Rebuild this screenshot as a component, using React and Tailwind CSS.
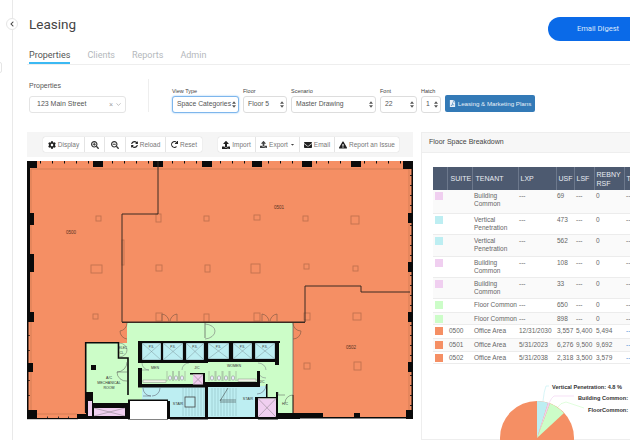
import React from "react";
import {
  FaCog,
  FaSearchPlus,
  FaSearchMinus,
  FaSyncAlt,
  FaRedo,
  FaUpload,
  FaEnvelope,
  FaExclamationTriangle,
  FaFilePdf,
  FaChevronLeft,
  FaCaretDown,
} from "react-icons/fa";

const ORANGE = "#f58f64";
const GREEN = "#ccfdc8";
const BLUE = "#bdeef2";
const PINK = "#f0cff0";
const WALL = "#0a0a0a";

const rows = [
  { color: PINK, suite: "", tenant: "Building Common", lxp: "---", usf: "69", lsf: "---", rsf: "0", h: "h-[23px]" },
  { color: BLUE, suite: "", tenant: "Vertical Penetration", lxp: "---", usf: "473", lsf: "---", rsf: "0", h: "h-[21px]" },
  { color: BLUE, suite: "", tenant: "Vertical Penetration", lxp: "---", usf: "562", lsf: "---", rsf: "0", h: "h-[22px]" },
  { color: PINK, suite: "", tenant: "Building Common", lxp: "---", usf: "108", lsf: "---", rsf: "0", h: "h-[21px]" },
  { color: PINK, suite: "", tenant: "Building Common", lxp: "---", usf: "33", lsf: "---", rsf: "0", h: "h-[21px]" },
  { color: GREEN, suite: "", tenant: "Floor Common", lxp: "---", usf: "650", lsf: "---", rsf: "0", h: "h-[14px]" },
  { color: GREEN, suite: "", tenant: "Floor Common", lxp: "---", usf: "898", lsf: "---", rsf: "0", h: "h-[12px]" },
  { color: ORANGE, suite: "0500", tenant: "Office Area", lxp: "12/31/2030", usf: "3,557", lsf: "5,400", rsf: "5,494", h: "h-[14px]", link: true },
  { color: ORANGE, suite: "0501", tenant: "Office Area", lxp: "5/31/2023", usf: "6,276", lsf: "9,500", rsf: "9,692", h: "h-[13px]", link: true },
  { color: ORANGE, suite: "0502", tenant: "Office Area", lxp: "5/31/2038", usf: "2,318", lsf: "3,500", rsf: "3,579", h: "h-[12px]", link: true },
];

// perimeter columns and walls, in page pixels
const perimeter = [
  [27, 161, 10, 7], [93, 161, 10, 6], [153, 161, 10, 6], [202, 161, 10, 6], [252, 161, 10, 6],
  [302, 161, 10, 6], [351, 161, 10, 6], [403, 161, 10, 8],
  [27, 161, 3, 161], [27, 161, 1.5, 258], [27, 213, 7, 12], [27, 254, 7, 18], [27, 312, 7, 10], [27, 363, 6, 9], [27, 410, 10, 9],
  [411.5, 161, 1.5, 258], [408, 213, 5, 10], [408, 262, 5, 10], [408, 312, 5, 10], [408, 362, 5, 10], [406, 410, 7, 9],
  [27, 418, 51, 1.2], [77, 414, 9, 5], [300, 413, 23, 5.5], [323, 417, 90, 1.5], [354, 413, 6, 5],
];

const squares = [
  [96, 216, 5, 5], [91, 265, 11, 8], [93, 314, 5, 5], [156, 214, 5, 8], [156, 265, 6, 6],
  [204, 216, 5, 5], [205, 265, 5, 7], [156, 313, 6, 8], [204, 314, 5, 8], [254, 215, 6, 5],
  [303, 216, 5, 5], [351, 216, 8, 8], [251, 264, 9, 9], [304, 264, 5, 5], [353, 266, 5, 5],
  [304, 313, 6, 7], [353, 313, 8, 7], [254, 313, 6, 8], [122, 240, 2, 25], [304, 363, 6, 6], [354, 362, 7, 8],
];

const elevators = [
  [142, 343, 19, 17], [163, 343, 20, 17], [186, 343, 18, 17],
  [208, 343, 21, 16], [233, 343, 19, 16], [255, 343, 20, 16],
];

// black core walls
const coreWalls = [
  [138, 341, 67, 2], [138, 341, 4, 22], [204, 341, 4, 22], [161, 343, 2, 17], [183, 343, 3, 17], [138, 360, 67, 3],
  [205, 341, 75, 2], [229, 343, 4, 16], [252, 343, 3, 16], [275, 341, 4, 24], [205, 359, 74, 3],
  [138, 368, 4, 19], [138, 384, 67, 3.5], [205, 382, 55, 5], [257, 371, 3, 15], [266, 384, 1.5, 13],
  [190, 373, 15, 1.5], [203, 373, 2, 13],
  [166, 401, 4, 18], [205, 387, 3, 31], [170, 417, 38, 2.5], [208, 417, 50, 2],
  [255, 397, 3, 21], [255, 397, 23, 1.5], [276, 392, 2, 27], [258, 417, 20, 2.5], [277, 413, 23, 6],
];

const PlanLabel = ({ x, y, children, size = 3.6 }) => (
  <text x={x} y={y} textAnchor="middle" fontSize={size} fill="#333" fontFamily="Liberation Sans, sans-serif">
    {children}
  </text>
);

const FloorPlan = () => (
  <svg viewBox="27 160 386 280" className="block h-[280px] w-[386px]">
    <rect x="27" y="160" width="386" height="280" fill="#fff" />
    <rect x="28" y="161" width="384" height="257" fill={ORANGE} />

    {/* perimeter ticks and inner line */}
    {Array.from({ length: 31 }, (_, i) => (
      <rect key={`t${i}`} x={40 + i * 12} y="161" width="1" height="2.5" fill="#111" />
    ))}
    {Array.from({ length: 24 }, (_, i) => (
      <rect key={`r${i}`} x="410" y={175 + i * 10} width="2" height="1" fill="#222" />
    ))}
    {Array.from({ length: 5 }, (_, i) => (
      <rect key={`l${i}`} x="28" y={335 + i * 15} width="2" height="1" fill="#5a3526" />
    ))}
    {[47, 58, 68].map((x) => (
      <rect key={x} x={x} y="416.5" width="1" height="2" fill="#333" />
    ))}
    <path d="M31 169H409V414M31 169V414H77" fill="none" stroke="#c9764f" strokeWidth="0.7" />

    {perimeter.map(([x, y, w, h], i) => (
      <rect key={i} x={x} y={y} width={w} height={h} fill={WALL} />
    ))}
    {squares.map(([x, y, w, h], i) => (
      <rect key={i} x={x} y={y} width={w} height={h} fill="none" stroke="#c2714e" strokeWidth="0.9" />
    ))}

    {/* tenant lines */}
    <path d="M158 161V214H122V322H305V286H361V292H410" fill="none" stroke="#3a2a22" strokeWidth="1" />

    <g fontFamily="Liberation Sans, sans-serif" fontSize="4.6" fill="#5a3526" textAnchor="middle">
      <text x="71" y="234">0500</text>
      <text x="279" y="209">0501</text>
      <text x="351" y="349">0502</text>
    </g>

    {/* core */}
    <rect x="127" y="323" width="166" height="90" fill={GREEN} />
    <path d="M122 322.5H305" stroke="#3a2a22" strokeWidth="1" />
    <path d="M293 323V395M205 323V338" stroke="#555" strokeWidth="0.7" fill="none" />

    {/* doors */}
    <g fill="none" stroke="#8a5f48" strokeWidth="0.7">
      <path d="M162 322V314A8 8 0 0 1 169 322M177 322V314A8 8 0 0 0 170 322" />
      <path d="M262 322V314A8 8 0 0 1 269 322M277 322V314A8 8 0 0 0 270 322" />
      <path d="M127 323A8 8 0 0 1 120 331M120 331A8 8 0 0 0 127 339" />
      <path d="M293 323A8 8 0 0 0 301 331M301 331A8 8 0 0 1 293 339" />
    </g>
    <path d="M205 324A11 7 0 0 1 215 331A11 8 0 0 1 205 339" fill="none" stroke="#777" strokeWidth="0.6" />

    {/* mechanical room */}
    <rect x="86" y="343" width="41" height="60" fill={GREEN} />
    <path d="M85.7 413V342.7H118.5V358H128V395" fill="none" stroke={WALL} strokeWidth="1.6" />
    <rect x="91" y="365" width="5" height="5" fill={WALL} />
    <rect x="86" y="392" width="7" height="27" fill={WALL} />
    <rect x="86" y="403" width="43" height="16" fill={WALL} />
    <rect x="88" y="401" width="4" height="15" fill={PINK} />
    <rect x="94" y="408" width="31" height="8" fill={PINK} />
    <path d="M94 408L125 416M125 408L94 416" stroke="#666" strokeWidth="0.4" />
    <path d="M117 372A10 10 0 0 0 127 362M117 372H127M117 372A9 9 0 0 0 127 381" fill="none" stroke="#555" strokeWidth="0.5" />
    <path d="M119 343A8 7 0 0 1 127 350A8 7 0 0 1 119 357" fill="none" stroke="#666" strokeWidth="0.5" />
    <PlanLabel x="109" y="379">A/C</PlanLabel>
    <PlanLabel x="109" y="384">MECHANICAL</PlanLabel>
    <PlanLabel x="109" y="389">ROOM</PlanLabel>
    <PlanLabel x="123" y="349" size="3.2">ELEC</PlanLabel>
    <PlanLabel x="122" y="354" size="3.2">CL.</PlanLabel>

    {/* stairs */}
    <rect x="142" y="387" width="24" height="14" fill={BLUE} />
    <rect x="166" y="387" width="40" height="30" fill={BLUE} />
    <rect x="208" y="386" width="48" height="31" fill={BLUE} />
    <rect x="255" y="386" width="12" height="12" fill={BLUE} />
    {[173, 176, 179, 182, 185, 188, 191, 194].map((x) => (
      <line key={x} x1={x + 10} y1="388" x2={x + 10} y2="416" stroke="#6f969c" strokeWidth="0.35" />
    ))}
    {[212, 215, 218, 221, 224, 227, 230, 233, 236].map((x) => (
      <line key={x} x1={x} y1="388" x2={x} y2="416" stroke="#6f969c" strokeWidth="0.35" />
    ))}
    <rect x="185" y="397" width="10" height="10" fill={BLUE} stroke="#444" strokeWidth="0.8" />
    <path d="M220 401L228 388M220 400H236M220 402H236" stroke="#333" strokeWidth="0.5" fill="none" />
    <path d="M143 388A8 8 0 0 0 151 396M143 396H151M160 388A8 8 0 0 1 152 396" fill="none" stroke="#556" strokeWidth="0.5" />
    <path d="M266 385A9 9 0 0 1 257 394" fill="none" stroke="#556" strokeWidth="0.5" />
    <PlanLabel x="178" y="405">STAIR</PlanLabel>
    <PlanLabel x="248" y="400">STAIR</PlanLabel>

    {/* elevators */}
    {elevators.map(([x, y, w, h], i) => (
      <g key={i}>
        <rect x={x} y={y} width={w} height={h} fill={BLUE} stroke="#556" strokeWidth="0.4" />
        <path d={`M${x} ${y}L${x + w} ${y + h}M${x + w} ${y}L${x} ${y + h}`} stroke="#6f8388" strokeWidth="0.4" />
        <text x={x + w / 2} y={y + 5} textAnchor="middle" fontSize="3" fill="#333" fontFamily="Liberation Sans, sans-serif">P.S.</text>
      </g>
    ))}

    {/* restrooms */}
    <path d="M142 363A7 7 0 0 0 149 370M142 370H149M189 363A7 7 0 0 0 182 370M258 363A8 7 0 0 1 266 370M258 371A8 7 0 0 0 266 378" fill="none" stroke="#667" strokeWidth="0.45" />
    <PlanLabel x="155" y="369">MEN</PlanLabel>
    <PlanLabel x="234" y="367">WOMEN</PlanLabel>
    <PlanLabel x="197" y="369">J/C</PlanLabel>
    <PlanLabel x="262" y="383">J/C</PlanLabel>
    {[167, 173, 179, 209, 216, 223, 230].map((x) => (
      <g key={x}>
        <path d={`M${x} 371V381M${x + 6} 371V381`} stroke="#777" strokeWidth="0.4" />
        <ellipse cx={x + 3} cy="378" rx="1.6" ry="2.2" fill="#eef" stroke="#666" strokeWidth="0.4" />
      </g>
    ))}
    <rect x="143" y="380" width="23" height="2.5" fill="#f2f4e8" stroke="#777" strokeWidth="0.4" />
    <rect x="238" y="379" width="18" height="2.5" fill="#f2f4e8" stroke="#777" strokeWidth="0.4" />

    {coreWalls.map(([x, y, w, h], i) => (
      <rect key={i} x={x} y={y} width={w} height={h} fill={WALL} />
    ))}

    <rect x="193" y="374.5" width="10" height="10" fill={PINK} />
    <path d="M193 374.5L203 384.5M203 374.5L193 384.5" stroke="#666" strokeWidth="0.4" />
    <rect x="258" y="398.5" width="18" height="18.5" fill={PINK} />
    <path d="M258 398.5L276 417M276 398.5L258 417" stroke="#666" strokeWidth="0.4" />

    <path d="M293 395A8 8 0 0 0 285 403M278 392V395H285" fill="none" stroke="#555" strokeWidth="0.5" />
    <path d="M293 395V413" stroke={WALL} strokeWidth="1" />
    <PlanLabel x="285" y="405">H/C</PlanLabel>

    {/* notch */}
    <rect x="128" y="399.5" width="40" height="20" fill={WALL} />
    <rect x="130" y="401" width="37" height="18" fill="#fff" />
  </svg>
);

const Pie = () => (
  <svg viewBox="490 380 140 60" className="block h-[60px] w-[140px]">
    <circle cx="537" cy="437" r="37" fill={ORANGE} />
    <path d="M537 437L537 400A37 37 0 0 1 548 401.7Z" fill={BLUE} />
    <path d="M537 437L548 401.7A37 37 0 0 1 550 402.4Z" fill={PINK} />
    <path d="M537 437L550 402.4A37 37 0 0 1 564 412Z" fill={GREEN} />
    <path d="M543 400Q544 390 546 385H549" fill="none" stroke={BLUE} strokeWidth="0.6" />
    <path d="M549 402Q552 396 554 395H574" fill="none" stroke={PINK} strokeWidth="0.6" />
    <path d="M558 406Q560 402 566 401L584 407" fill="none" stroke={GREEN} strokeWidth="0.6" />
    <g fontFamily="Liberation Sans, sans-serif" fontWeight="700" fontSize="5.6" fill="#333">
      <text x="552" y="388">Vertical Penetration: 4.8 %</text>
      <text x="578" y="399">Building Common:</text>
      <text x="588" y="411">FloorCommon:</text>
    </g>
  </svg>
);

const Arrows = () => (
  <svg viewBox="0 0 6 10" className="h-[7px] w-[4px] shrink-0 fill-[#555]">
    <path d="M3 0L6 4H0ZM3 10L0 6H6Z" />
  </svg>
);

const Field = ({ label, value, className = "", focus }) => (
  <div className="flex flex-col">
    <span className="mb-[1px] h-[8px] text-[5.5px] leading-[8px] text-[#444]">{label}</span>
    <div
      className={`flex h-[17px] items-center justify-between rounded-[3px] border bg-white pl-[4px] pr-[2px] text-[6.8px] text-[#555] ${
        focus ? "border-[#7eb6ec] shadow-[0_0_2px_#8fc4f5]" : "border-[#ddd]"
      } ${className}`}
    >
      <span className="whitespace-nowrap">{value}</span>
      <Arrows />
    </div>
  </div>
);

const ToolButton = ({ icon, children, className = "" }) => (
  <div className={`flex h-full items-center justify-center gap-[2px] border-r border-[#e4e4e4] text-[6.5px] text-[#777] last:border-r-0 ${className}`}>
    {icon}
    {children}
  </div>
);

const Toolbar = () => (
  <div className="flex h-[25px] items-center bg-[#f5f5f5] pl-[16px]">
    <div className="flex h-[15px] rounded-[2px] bg-white shadow-[0_0_1px_#bbb]">
      <ToolButton className="w-[42px]" icon={<FaCog className="size-[8px] text-[#222]" />}>Display</ToolButton>
      <ToolButton className="w-[20px]" icon={<FaSearchPlus className="size-[8px] text-[#333]" />} />
      <ToolButton className="w-[21px]" icon={<FaSearchMinus className="size-[8px] text-[#333]" />} />
      <ToolButton className="w-[40px]" icon={<FaSyncAlt className="size-[7px] text-[#222]" />}>Reload</ToolButton>
      <ToolButton className="w-[36px]" icon={<FaRedo className="size-[7px] text-[#222]" />}>Reset</ToolButton>
    </div>
    <div className="ml-[16px] flex h-[15px] rounded-[2px] bg-white shadow-[0_0_1px_#bbb]">
      <ToolButton className="w-[38px]" icon={<FaUpload className="size-[8px] text-[#222]" />}>Import</ToolButton>
      <ToolButton className="w-[44px]" icon={<FaUpload className="size-[7px] text-[#444]" />}>
        Export <FaCaretDown className="size-[5px] text-[#444]" />
      </ToolButton>
      <ToolButton className="w-[35px]" icon={<FaEnvelope className="size-[8px] text-[#222]" />}>Email</ToolButton>
      <ToolButton className="w-[64px]" icon={<FaExclamationTriangle className="size-[8px] text-[#222]" />}>Report an Issue</ToolButton>
    </div>
  </div>
);

const Breakdown = () => (
  <div className="h-[308px] w-[240px] shrink-0 border border-[#eee] bg-white">
    <div className="flex h-[20px] items-center border-b border-[#eee] bg-[#f7f7f7] pl-[7px] text-[7px] text-[#444]">
      Floor Space Breakdown
    </div>
    <div className="pl-[11px] pt-[14px]">
      <table className="w-[209px] table-fixed border-collapse text-[6.5px] text-[#666]">
        <colgroup>
          <col className="w-[14px]" />
          <col className="w-[25px]" />
          <col className="w-[46px]" />
          <col className="w-[38px]" />
          <col className="w-[18px]" />
          <col className="w-[20px]" />
          <col className="w-[30px]" />
          <col className="w-[18px]" />
        </colgroup>
        <thead>
          <tr className="h-[23px] bg-[#4d5a70] text-left text-[7px] font-normal leading-[9px] text-[#e8ecf2]">
            <th className="border-r border-[#6c788c] font-normal"></th>
            <th className="border-r border-[#6c788c] pl-[3px] font-normal">SUITE</th>
            <th className="border-r border-[#6c788c] pl-[3px] font-normal">TENANT</th>
            <th className="border-r border-[#6c788c] pl-[2px] font-normal">LXP</th>
            <th className="border-r border-[#6c788c] pl-[2px] font-normal">USF</th>
            <th className="border-r border-[#6c788c] pl-[2px] font-normal">LSF</th>
            <th className="border-r border-[#6c788c] pl-[2px] font-normal">REBNY RSF</th>
            <th className="pl-[2px] font-normal">T F</th>
          </tr>
        </thead>
        <tbody>
          {rows.map((row, i) => (
            <tr key={i} className={`${row.h} border-b border-[#ececec] align-top leading-[8px] ${i % 2 === 0 ? "bg-[#fafafa]" : "bg-white"}`}>
              <td className="pl-[2px] pt-[2px]">
                <div className="size-[8px]" style={{ backgroundColor: row.color }} />
              </td>
              <td className="pl-[2px] pt-[2px]">{row.suite}</td>
              <td className="pl-[2px] pt-[2px]">{row.tenant}</td>
              <td className="pl-[1px] pt-[2px] whitespace-nowrap">{row.lxp}</td>
              <td className="pl-[1px] pt-[2px]">{row.usf}</td>
              <td className="pl-[2px] pt-[2px]">{row.lsf}</td>
              <td className="pl-[2px] pt-[2px]">{row.rsf}</td>
              <td className={`pl-[2px] pt-[2px] ${row.link ? "text-[#4a90d9]" : ""}`}>--</td>
            </tr>
          ))}
        </tbody>
      </table>
      <div className="ml-[57px] mt-[17px]">
        <Pie />
      </div>
    </div>
  </div>
);

export default function App() {
  return (
    <div className="relative flex h-[440px] w-[630px] overflow-hidden bg-white font-['Roboto',sans-serif]">
      <div className="w-[13px] shrink-0 border-r border-[#e9e9e9]" />

      {/* collapse button and edge tab lie over the sidebar border */}
      <div className="absolute left-[6px] top-[18px] flex size-[12px] items-center justify-center rounded-full border border-[#e5e5e5] bg-white">
        <FaChevronLeft className="size-[6px] text-[#444]" />
      </div>
      <div className="absolute left-[-3px] top-[62px] h-[11px] w-[5px] rounded-[2px] border border-[#e5e5e5]" />

      <div className="min-w-0 flex-1 pl-[14px]">
        <div className="flex h-[47px] items-start justify-between pl-[2px]">
          <h1 className="pt-[14px] text-[13.5px] font-normal leading-[20px] text-[#444]">Leasing</h1>
          <button className="mt-[17px] h-[24px] w-[82px] rounded-l-[12px] bg-[#0a6ae8] pl-[18px] text-[7.6px] text-[#dce9fb]">Email Digest</button>
        </div>

        <div className="flex h-[18px] gap-[17px] border-b border-[#eeeeee] pl-[2px] text-[9px] text-[#b4b8bc]">
          <div className="h-[17px] border-b-2 border-[#3bb9f3] pt-[2px] leading-[13px] text-[#555]">Properties</div>
          <div className="pt-[2px] leading-[13px]">Clients</div>
          <div className="pt-[2px] leading-[13px]">Reports</div>
          <div className="pt-[2px] leading-[13px]">Admin</div>
        </div>

        <div className="flex h-[67px] items-start pl-[2px] pt-[16px] font-['Liberation_Sans',sans-serif]">
          <div className="flex w-[97px] flex-col">
            <span className="mb-[6px] text-[7px] leading-[9px] text-[#555]">Properties</span>
            <div className="flex h-[17px] items-center justify-between rounded-[3px] border border-[#e4e4e4] bg-white pl-[7px] pr-[4px] text-[7px] text-[#555]">
              <span>123 Main Street</span>
              <span className="flex items-center gap-[3px] text-[#999]">
                <span className="text-[7px] leading-none">×</span>
                <svg viewBox="0 0 8 5" className="h-[3px] w-[5px] fill-none stroke-[#999]"><path d="M0.5 0.5L4 4L7.5 0.5" /></svg>
              </span>
            </div>
          </div>
          <div className="ml-[22px] mr-[23px] mt-[-2px] h-[33px] w-px bg-[#eeeeee]" />
          <div className="mt-[6px] flex items-end gap-[4px]">
            <Field label="View Type" value="Space Categories" focus className="w-[67px]" />
            <Field label="Floor" value="Floor 5" className="w-[44px]" />
            <Field label="Scenario" value="Master Drawing" className="w-[85px]" />
            <Field label="Font" value="22" className="w-[37px]" />
            <Field label="Hatch" value="1" className="w-[20px]" />
            <button className="mb-[1px] flex h-[17px] w-[90px] items-center justify-center gap-[2px] rounded-[2px] bg-[#337ab7] text-[6.2px] text-[#e8f0f8]">
              <FaFilePdf className="size-[7px]" />
              Leasing &amp; Marketing Plans
            </button>
          </div>
        </div>

        <div className="flex gap-[8px] font-['Liberation_Sans',sans-serif]">
          <div className="w-[386px] shrink-0">
            <Toolbar />
            <div className="mt-[3px]">
              <FloorPlan />
            </div>
          </div>
          <Breakdown />
        </div>
      </div>
    </div>
  );
}
